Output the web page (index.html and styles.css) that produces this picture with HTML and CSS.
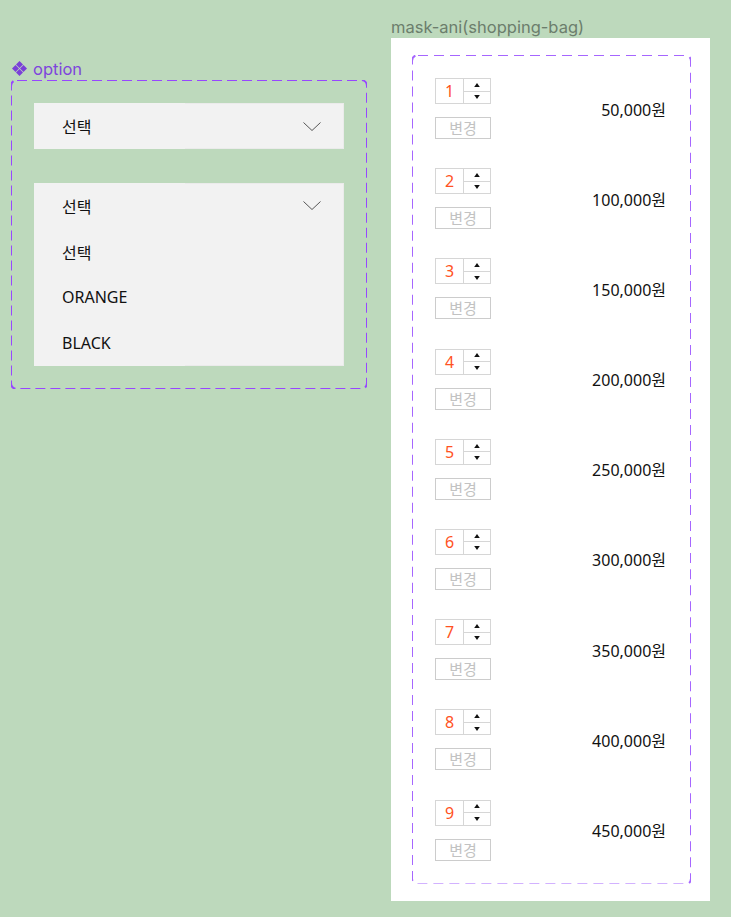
FILE: index.html
```html
<!DOCTYPE html>
<html lang="ko">
<head>
<meta charset="utf-8">
<title>option / mask-ani</title>
<link rel="stylesheet" href="styles.css">
</head>
<body>
<div class="canvas">
  <section class="option-col">
    <div class="comp-label">
      <svg class="comp-icon" width="15" height="15" viewBox="0 0 15 15" aria-hidden="true">
        <path d="M7.5 0 L11 3.5 L7.5 7 L4 3.5 Z"/>
        <path d="M7.5 8 L11 11.5 L7.5 15 L4 11.5 Z"/>
        <path d="M3.5 4 L7 7.5 L3.5 11 L0 7.5 Z"/>
        <path d="M11.5 4 L15 7.5 L11.5 11 L8 7.5 Z"/>
      </svg>
      <span>option</span>
    </div>
    <div class="comp-box">
      <div class="select">
        <div class="select-row">
          <span>선택</span>
          <svg class="chev" width="18" height="9" viewBox="0 0 18 9" aria-hidden="true"><polyline points="0.5,0.5 9,8.5 17.5,0.5"/></svg>
        </div>
      </div>
      <div class="select open">
        <div class="select-row">
          <span>선택</span>
          <svg class="chev" width="18" height="9" viewBox="0 0 18 9" aria-hidden="true"><polyline points="0.5,0.5 9,8.5 17.5,0.5"/></svg>
        </div>
        <div class="select-row"><span>선택</span></div>
        <div class="select-row"><span>ORANGE</span></div>
        <div class="select-row"><span>BLACK</span></div>
      </div>
    </div>
  </section>

  <section class="bag-col">
    <div class="frame-title">mask-ani(shopping-bag)</div>
    <div class="frame">
      <div class="bag-box">
        <div class="item"><div class="ctrl"><div class="stepper"><span class="num">1</span><span class="arrows"><span class="arr"><svg width="7" height="5" viewBox="0 0 7 5"><path d="M3.5 0 L7 5 L0 5 Z"/></svg></span><span class="arr down"><svg width="7" height="5" viewBox="0 0 7 5"><path d="M0 0 L7 0 L3.5 5 Z"/></svg></span></span></div><button class="change">변경</button></div><div class="price">50,000원</div></div>
        <div class="item"><div class="ctrl"><div class="stepper"><span class="num">2</span><span class="arrows"><span class="arr"><svg width="7" height="5" viewBox="0 0 7 5"><path d="M3.5 0 L7 5 L0 5 Z"/></svg></span><span class="arr down"><svg width="7" height="5" viewBox="0 0 7 5"><path d="M0 0 L7 0 L3.5 5 Z"/></svg></span></span></div><button class="change">변경</button></div><div class="price">100,000원</div></div>
        <div class="item"><div class="ctrl"><div class="stepper"><span class="num">3</span><span class="arrows"><span class="arr"><svg width="7" height="5" viewBox="0 0 7 5"><path d="M3.5 0 L7 5 L0 5 Z"/></svg></span><span class="arr down"><svg width="7" height="5" viewBox="0 0 7 5"><path d="M0 0 L7 0 L3.5 5 Z"/></svg></span></span></div><button class="change">변경</button></div><div class="price">150,000원</div></div>
        <div class="item"><div class="ctrl"><div class="stepper"><span class="num">4</span><span class="arrows"><span class="arr"><svg width="7" height="5" viewBox="0 0 7 5"><path d="M3.5 0 L7 5 L0 5 Z"/></svg></span><span class="arr down"><svg width="7" height="5" viewBox="0 0 7 5"><path d="M0 0 L7 0 L3.5 5 Z"/></svg></span></span></div><button class="change">변경</button></div><div class="price">200,000원</div></div>
        <div class="item"><div class="ctrl"><div class="stepper"><span class="num">5</span><span class="arrows"><span class="arr"><svg width="7" height="5" viewBox="0 0 7 5"><path d="M3.5 0 L7 5 L0 5 Z"/></svg></span><span class="arr down"><svg width="7" height="5" viewBox="0 0 7 5"><path d="M0 0 L7 0 L3.5 5 Z"/></svg></span></span></div><button class="change">변경</button></div><div class="price">250,000원</div></div>
        <div class="item"><div class="ctrl"><div class="stepper"><span class="num">6</span><span class="arrows"><span class="arr"><svg width="7" height="5" viewBox="0 0 7 5"><path d="M3.5 0 L7 5 L0 5 Z"/></svg></span><span class="arr down"><svg width="7" height="5" viewBox="0 0 7 5"><path d="M0 0 L7 0 L3.5 5 Z"/></svg></span></span></div><button class="change">변경</button></div><div class="price">300,000원</div></div>
        <div class="item"><div class="ctrl"><div class="stepper"><span class="num">7</span><span class="arrows"><span class="arr"><svg width="7" height="5" viewBox="0 0 7 5"><path d="M3.5 0 L7 5 L0 5 Z"/></svg></span><span class="arr down"><svg width="7" height="5" viewBox="0 0 7 5"><path d="M0 0 L7 0 L3.5 5 Z"/></svg></span></span></div><button class="change">변경</button></div><div class="price">350,000원</div></div>
        <div class="item"><div class="ctrl"><div class="stepper"><span class="num">8</span><span class="arrows"><span class="arr"><svg width="7" height="5" viewBox="0 0 7 5"><path d="M3.5 0 L7 5 L0 5 Z"/></svg></span><span class="arr down"><svg width="7" height="5" viewBox="0 0 7 5"><path d="M0 0 L7 0 L3.5 5 Z"/></svg></span></span></div><button class="change">변경</button></div><div class="price">400,000원</div></div>
        <div class="item"><div class="ctrl"><div class="stepper"><span class="num">9</span><span class="arrows"><span class="arr"><svg width="7" height="5" viewBox="0 0 7 5"><path d="M3.5 0 L7 5 L0 5 Z"/></svg></span><span class="arr down"><svg width="7" height="5" viewBox="0 0 7 5"><path d="M0 0 L7 0 L3.5 5 Z"/></svg></span></span></div><button class="change">변경</button></div><div class="price">450,000원</div></div>
      </div>
    </div>
  </section>
</div>
</body>
</html>
```

FILE: styles.css
```css
* { box-sizing: border-box; }

html, body {
  margin: 0;
  padding: 0;
  background: #bdd9bc;
}

body {
  width: 731px;
  height: 917px;
  overflow: hidden;
  font-family: "Noto Sans", "Noto Sans CJK KR", sans-serif;
  color: #111;
}

.canvas {
  display: flex;
  align-items: flex-start;
  padding-left: 11px;
}

/* ---------- option component ---------- */
.option-col {
  margin-top: 58px;
  width: 356px;
}

.comp-label {
  display: flex;
  align-items: center;
  gap: 6px;
  height: 21px;
  padding-left: 1px;
  margin-bottom: 1px;
  font-family: Inter, "Noto Sans", sans-serif;
  font-size: 16.5px;
  color: #7e45dc;
}

.comp-icon { fill: #7a40d8; flex: none; }

.comp-box {
  width: 356px;
  padding: 23px;
  display: flex;
  flex-direction: column;
  gap: 34px;
  background-image: url("data:image/svg+xml,%3Csvg xmlns='http://www.w3.org/2000/svg' width='100%25' height='100%25'%3E%3Crect x='0' y='0' width='100%25' height='100%25' rx='6' ry='6' fill='none' stroke='%239747ff' stroke-width='2' stroke-dasharray='10 5'/%3E%3C/svg%3E");
}

.select {
  position: relative;
  width: 310px;
  background: #f2f2f2;
  font-size: 16px;
}

.select::after {
  content: "";
  position: absolute;
  left: 151px;
  top: 0;
  right: 0;
  bottom: 0;
  border: 1px solid #ebebeb;
  border-left: none;
  pointer-events: none;
}

.select-row {
  height: 46px;
  display: flex;
  align-items: center;
  justify-content: space-between;
  padding: 0 23px 0 28px;
}

.select.open .select-row { height: 45.75px; }

.chev { flex: none; }
.chev polyline { fill: none; stroke: #555; stroke-width: 1; }

/* ---------- shopping bag frame ---------- */
.bag-col {
  margin-left: 24px;
  padding-top: 17px;
}

.frame-title {
  height: 20px;
  line-height: 20px;
  margin-bottom: 1px;
  font-family: Inter, "Noto Sans", sans-serif;
  font-size: 16.5px;
  color: #6c7e6c;
  white-space: nowrap;
}

.frame {
  width: 319px;
  height: 863px;
  background: #fff;
  padding: 17px 19px 17px 21px;
}

.bag-box {
  width: 279px;
  padding: 23px 25px 23px 23px;
  display: flex;
  flex-direction: column;
  gap: 29.2px;
  background-image: url("data:image/svg+xml,%3Csvg xmlns='http://www.w3.org/2000/svg' width='100%25' height='100%25'%3E%3Crect x='0' y='0' width='100%25' height='100%25' rx='6' ry='6' fill='none' stroke='%23a666ff' stroke-width='2' stroke-dasharray='10 6'/%3E%3C/svg%3E");
}

.item {
  height: 61px;
  display: flex;
  align-items: center;
  justify-content: space-between;
}

.ctrl {
  display: flex;
  flex-direction: column;
  gap: 13px;
}

.stepper {
  display: flex;
  width: 56px;
  height: 26px;
  border: 1px solid #d6d6d6;
}

.num {
  width: 28px;
  border-right: 1px solid #d6d6d6;
  display: flex;
  align-items: center;
  justify-content: center;
  font-size: 16px;
  color: #ff5223;
}

.arrows {
  flex: 1;
  display: flex;
  flex-direction: column;
}

.arr {
  flex: 1;
  display: flex;
  align-items: center;
  justify-content: center;
}

.arr.down { border-top: 1px solid #d6d6d6; }
.arr svg { fill: #111; width: 6px; height: 4px; }

.change {
  width: 56px;
  height: 22px;
  margin: 0;
  padding: 0;
  border: 1px solid #cccccc;
  background: #fff;
  font-family: "Noto Sans CJK KR", "Noto Sans", sans-serif;
  font-size: 15px;
  line-height: 20px;
  color: #c2c2c2;
}

.price {
  font-size: 16px;
  color: #111;
  white-space: nowrap;
}
```
